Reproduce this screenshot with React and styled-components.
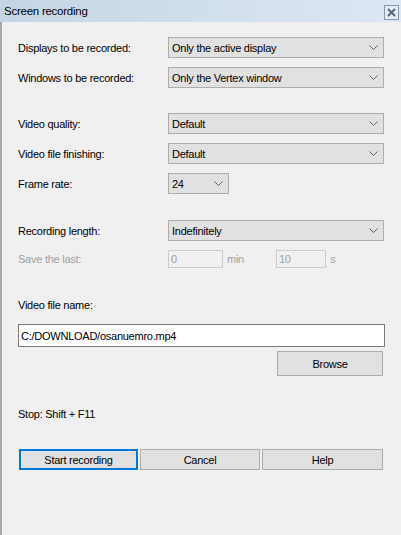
import React from "react";
import styled, { createGlobalStyle } from "styled-components";

const Global = createGlobalStyle`
  html, body { margin: 0; padding: 0; background: #f0f0f0; }
  body {
    font-family: "Liberation Sans", Arial, sans-serif;
    font-size: 11px;
    letter-spacing: -0.25px;
    color: #000;
  }
  * { box-sizing: border-box; }
`;

const Window = styled.div`
  width: 401px;
  height: 535px;
  display: flex;
  flex-direction: column;
  background: #f0f0f0;
  overflow: hidden;
`;

const TitleBar = styled.div`
  height: 22px;
  flex: none;
  display: flex;
  align-items: center;
  justify-content: space-between;
  padding: 0 2px 0 4px;
  background: linear-gradient(to right, #c6d5e5, #dce7f3);
  font-size: 11.5px;
  color: #000;
`;

const CloseBox = styled.div`
  width: 15px;
  height: 15px;
  border: 1px solid #8a98a8;
  background: #e4ecf5;
  display: flex;
  align-items: center;
  justify-content: center;
  margin-top: 2px;
`;

const Body = styled.div`
  flex: 1;
  display: flex;
  flex-direction: column;
  padding: 15px 17px 0 16px;
  border-left: 2px solid #a8a8a8;
`;

const Section = styled.div`
  display: flex;
  flex-direction: column;
  gap: ${(p) => p.$gap ?? 9}px;
  margin-top: ${(p) => p.$top ?? 0}px;
`;

const Row = styled.div`
  display: flex;
  align-items: center;
  height: ${(p) => p.$h ?? 21}px;
`;

const Label = styled.span`
  width: 150px;
  flex: none;
  color: ${(p) => (p.$disabled ? "#a0a0a0" : "#000")};
`;

const SelectBox = styled.div`
  width: ${(p) => p.$w ?? 217}px;
  height: 21px;
  border: 1px solid #adadad;
  background: #e1e1e1;
  display: flex;
  align-items: center;
  justify-content: space-between;
  padding: 0 5px 0 3px;
`;

const NumberField = styled.div`
  width: ${(p) => p.$w}px;
  height: 18px;
  border: 1px solid #cccccc;
  background: #f0f0f0;
  color: #a0a0a0;
  padding: 1px 2px;
  line-height: 14px;
`;

const Unit = styled.span`
  color: #a0a0a0;
  width: ${(p) => p.$w}px;
  padding-left: 4px;
  flex: none;
`;

const Caption = styled.div`
  margin-top: ${(p) => p.$top}px;
  line-height: 13px;
`;

const TextField = styled.div`
  margin-top: 12px;
  width: 367px;
  height: 23px;
  border: 1px solid #7a7a7a;
  background: #fff;
  padding: 0 2px;
  display: flex;
  align-items: center;
`;

const BrowseRow = styled.div`
  display: flex;
  justify-content: flex-end;
  margin-top: 4px;
  width: 365px;
`;

const Button = styled.div`
  width: ${(p) => p.$w}px;
  height: ${(p) => p.$h ?? 21}px;
  border: ${(p) => (p.$focused ? "2px solid #0078d7" : "1px solid #adadad")};
  background: #e1e1e1;
  display: flex;
  align-items: center;
  justify-content: center;
  color: #000;
`;

const ButtonBar = styled.div`
  display: flex;
  gap: 2px;
  margin: 28px 0 0 1px;
`;

const Chevron = () => (
  <svg width="9" height="5" viewBox="0 0 9 5">
    <path d="M0.5 0.5 L4.5 4.5 L8.5 0.5" fill="none" stroke="#606060" strokeWidth="1" />
  </svg>
);

const Select = ({ value, width }) => (
  <SelectBox $w={width}>
    <span>{value}</span>
    <Chevron />
  </SelectBox>
);

export default function App() {
  return (
    <>
      <Global />
      <Window>
        <TitleBar>
          <span>Screen recording</span>
          <CloseBox>
            <svg width="9" height="9" viewBox="0 0 9 9">
              <path d="M1 1 L8 8 M8 1 L1 8" stroke="#5a6675" strokeWidth="2" />
            </svg>
          </CloseBox>
        </TitleBar>
        <Body>
          <Section>
            <Row>
              <Label>Displays to be recorded:</Label>
              <Select value="Only the active display" />
            </Row>
            <Row>
              <Label>Windows to be recorded:</Label>
              <Select value="Only the Vertex window" />
            </Row>
          </Section>

          <Section $top={25}>
            <Row>
              <Label>Video quality:</Label>
              <Select value="Default" />
            </Row>
            <Row>
              <Label>Video file finishing:</Label>
              <Select value="Default" />
            </Row>
            <Row>
              <Label>Frame rate:</Label>
              <Select value="24" width={61} />
            </Row>
          </Section>

          <Section $top={26}>
            <Row>
              <Label>Recording length:</Label>
              <Select value="Indefinitely" />
            </Row>
            <Row $h={18}>
              <Label $disabled>Save the last:</Label>
              <NumberField $w={55}>0</NumberField>
              <Unit $w={53}>min</Unit>
              <NumberField $w={50}>10</NumberField>
              <Unit $w={20}>s</Unit>
            </Row>
          </Section>

          <Caption $top={31}>Video file name:</Caption>
          <TextField>C:/DOWNLOAD/osanuemro.mp4</TextField>
          <BrowseRow>
            <Button $w={106} $h={25}>Browse</Button>
          </BrowseRow>

          <Caption $top={32}>Stop: Shift + F11</Caption>

          <ButtonBar>
            <Button $w={119} $focused>Start recording</Button>
            <Button $w={120}>Cancel</Button>
            <Button $w={121}>Help</Button>
          </ButtonBar>
        </Body>
      </Window>
    </>
  );
}
